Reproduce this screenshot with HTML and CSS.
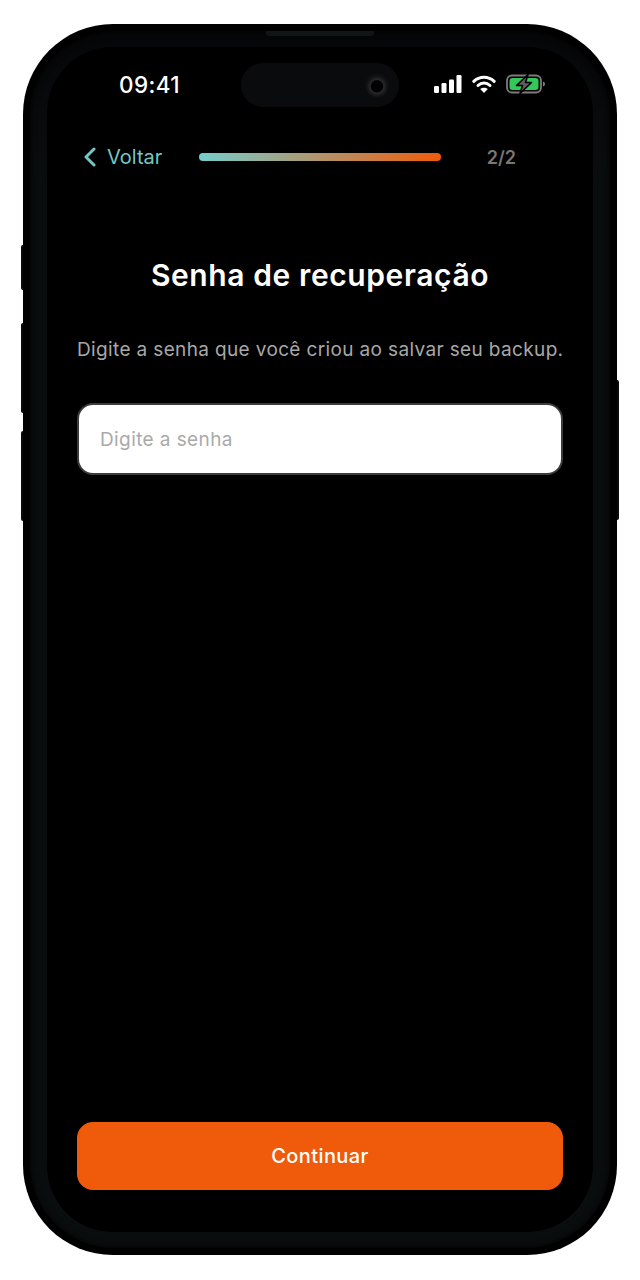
FILE: index.html
```html
<!DOCTYPE html>
<html lang="pt-BR">
<head>
  <meta charset="UTF-8">
  <meta name="viewport" content="width=device-width, initial-scale=1.0">
  <title>Senha de recuperação</title>
  <link rel="stylesheet" href="styles.css">
</head>
<body>
<div class="phone">
  <span class="side-btn mute"></span>
  <span class="side-btn vol-up"></span>
  <span class="side-btn vol-down"></span>
  <span class="side-btn power"></span>
  <span class="speaker"></span>

  <div class="bezel">
    <div class="screen">
      <div class="island">
        <span class="camera"></span>
      </div>

      <div class="status-bar">
        <span class="clock">09:41</span>
        <div class="status-icons">
          <svg class="signal" width="28" height="18" viewBox="0 0 28 18">
            <rect x="0" y="11" width="5" height="7" rx="1.2" fill="#fff"/>
            <rect x="7.500" y="8" width="5" height="10" rx="1.2" fill="#fff"/>
            <rect x="15" y="4.500" width="5" height="13.500" rx="1.2" fill="#fff"/>
            <rect x="22.500" y="0" width="5" height="18" rx="1.2" fill="#fff"/>
          </svg>
          <svg class="wifi" width="24" height="18" viewBox="0 0 24 18">
            <path d="M1.800 6.300C7.500 .8 16.500 .8 22.200 6.300" fill="none" stroke="#fff" stroke-width="3" stroke-linecap="round"/>
            <path d="M6 10.500C9.500 7.200 14.500 7.200 18 10.500" fill="none" stroke="#fff" stroke-width="3" stroke-linecap="round"/>
            <path d="M12 18L8.200 14.100C10.400 12.300 13.600 12.300 15.800 14.100Z" fill="#fff"/>
          </svg>
          <svg class="battery" width="40" height="20" viewBox="0 0 40 20">
            <rect x="1" y="1.500" width="34" height="17" rx="5" fill="none" stroke="#7c7c7c" stroke-width="1.800"/>
            <rect x="3.500" y="4" width="29" height="12" rx="3" fill="#34c759"/>
            <path d="M37 7.500c1.500.5 2 1.400 2 2.500s-.5 2-2 2.500Z" fill="#7c7c7c"/>
            <path d="M22 .5L10.500 11.500H16.500L14 19.500L25.500 8.500H19.500Z" fill="#5e5e5e" stroke="#000" stroke-width="1.600" stroke-linejoin="round"/>
          </svg>
        </div>
      </div>

      <div class="top-nav">
        <a class="back-link" href="#">
          <svg width="14" height="20" viewBox="0 0 14 20">
            <path d="M11 2L3 10L11 18" fill="none" stroke="#75c6c6" stroke-width="3" stroke-linecap="round" stroke-linejoin="round"/>
          </svg>
          <span>Voltar</span>
        </a>
        <div class="progress"></div>
        <span class="step">2/2</span>
      </div>

      <main class="content">
        <h1 class="title">Senha de recuperação</h1>
        <p class="subtitle">Digite a senha que você criou ao salvar seu backup.</p>
        <input class="password-input" type="text" placeholder="Digite a senha">
        <button class="continue-btn" type="button">Continuar</button>
      </main>
    </div>
  </div>
</div>
</body>
</html>
```

FILE: styles.css
```css
* {
  box-sizing: border-box;
}

body {
  margin: 0;
  background-color: #ffffff;
  font-family: Inter, "Noto Sans", sans-serif;
}

.phone {
  position: relative;
  width: 594px;
  height: 1231px;
  margin: 24px 0 25px 23px;
  padding: 7px;
  background-color: #000000;
  border-radius: 90px;
}

.bezel {
  height: 100%;
  padding: 16px 17px;
  background: linear-gradient(180deg, #050607, #0a0d0e 12%);
  border-radius: 84px;
  box-shadow: inset 0 0 7px #000000;
}

.screen {
  position: relative;
  display: flex;
  flex-direction: column;
  height: 100%;
  background-color: #000000;
  border-radius: 66px;
}

/* hardware bits around the frame */
.side-btn {
  position: absolute;
  width: 2px;
  background-color: #0a0a0a;
}

.mute {
  left: -2px;
  top: 221px;
  height: 45px;
  border-radius: 2px 0 0 2px;
}

.vol-up {
  left: -2px;
  top: 299px;
  height: 90px;
  border-radius: 2px 0 0 2px;
}

.vol-down {
  left: -2px;
  top: 407px;
  height: 90px;
  border-radius: 2px 0 0 2px;
}

.power {
  right: -2px;
  top: 356px;
  height: 140px;
  border-radius: 0 2px 2px 0;
}

.speaker {
  position: absolute;
  top: 7px;
  left: 243px;
  width: 108px;
  height: 5px;
  background-color: #121516;
  border-radius: 0 0 3px 3px;
}

.island {
  position: absolute;
  top: 16px;
  left: 194px;
  width: 158px;
  height: 44px;
  background-color: #090b0c;
  border-radius: 22px;
}

.camera {
  position: absolute;
  top: 9px;
  right: 10px;
  width: 24px;
  height: 26px;
  background: radial-gradient(circle at 50% 55%, #000 0 30%, #26282a 36%, #101112 56%, #090b0c 72%);
  border-radius: 50%;
}

.status-bar {
  display: flex;
  align-items: center;
  justify-content: space-between;
  height: 26px;
  margin-top: 24px;
  padding: 0 47px 0 72px;
}

.clock {
  color: #ffffff;
  font-size: 22.500px;
  font-weight: 500;
  letter-spacing: 0.4px;
}

.status-icons {
  display: flex;
  align-items: center;
  gap: 10px;
}

.top-nav {
  display: flex;
  align-items: center;
  margin-top: 47px;
  height: 26px;
  padding: 0 77px 0 36px;
}

.back-link {
  display: flex;
  align-items: center;
  gap: 10px;
  width: 116px;
  flex-shrink: 0;
  color: #75c6c6;
  font-size: 20px;
  text-decoration: none;
}

.progress {
  flex: 1;
  height: 8px;
  background: linear-gradient(90deg, #75cdcd, #ef5b0b);
  border-radius: 4px;
}

.step {
  width: 75px;
  flex-shrink: 0;
  color: #777777;
  font-size: 18px;
  font-weight: 600;
  text-align: right;
}

.content {
  display: flex;
  flex: 1;
  flex-direction: column;
  padding: 0 30px 42px;
}

.title {
  margin: 85px 0 0;
  color: #ffffff;
  font-size: 30px;
  font-weight: 600;
  letter-spacing: 0.6px;
  line-height: 40px;
  text-align: center;
}

.subtitle {
  margin: 42px 0 0;
  color: #a8a8a8;
  font-size: 19px;
  letter-spacing: 0.36px;
  line-height: 26px;
  text-align: center;
  white-space: nowrap;
}

.password-input {
  width: 486px;
  height: 72px;
  margin-top: 40px;
  padding: 0 21px;
  background-color: #ffffff;
  border: 2px solid #3c3c3c;
  border-radius: 16px;
  font-family: inherit;
  font-size: 19px;
  letter-spacing: 0.4px;
  outline: none;
}

.password-input::placeholder {
  color: #aaaaaa;
}

.continue-btn {
  width: 486px;
  height: 68px;
  margin-top: auto;
  background-color: #ef5b0b;
  border: none;
  border-radius: 16px;
  color: #ffffff;
  font-family: inherit;
  font-size: 20px;
  font-weight: 500;
  letter-spacing: 0.4px;
  cursor: pointer;
}
```
